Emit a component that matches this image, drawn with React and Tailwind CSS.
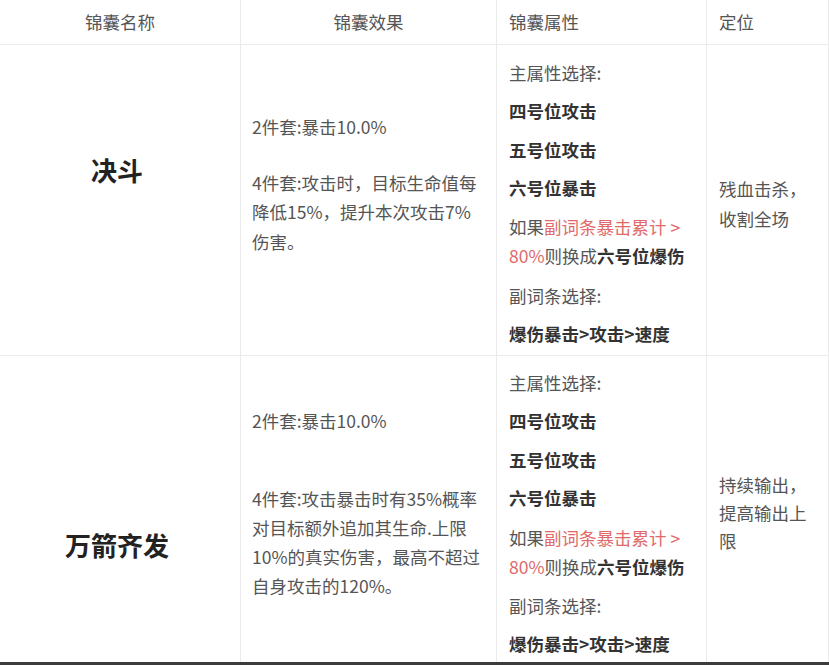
import React from "react";

const Red = ({ children }) => <span className="text-[#e06a6a]">{children}</span>;
const B = ({ children }) => <span className="font-bold text-[#333]">{children}</span>;

export default function App() {
  return (
    <div className="w-[829px] h-[665px] bg-white overflow-hidden font-['Noto_Sans_CJK_SC','Noto_Sans',sans-serif] text-[17.5px] text-[#555] flex flex-col">
      <div className="grid grid-cols-[241px_256px_210px_122px]">
        {/* header */}
        <div className="h-[45px] flex items-center justify-center border-r border-b border-[#ebebeb]">锦囊名称</div>
        <div className="h-[45px] flex items-center justify-center border-r border-b border-[#ebebeb]">锦囊效果</div>
        <div className="h-[45px] flex items-center pl-[12px] border-r border-b border-[#ebebeb]">锦囊属性</div>
        <div className="h-[45px] flex items-center pl-[12px] border-r border-b border-[#ebebeb]">定位</div>

        {/* row 1 */}
        <div className="h-[311px] pt-[107px] pr-[6px] text-center text-[26px] leading-[36px] font-bold text-[#222] border-r border-b border-[#ebebeb]">决斗</div>
        <div className="h-[311px] pt-[66.5px] pl-[11px] leading-[29.5px] whitespace-nowrap border-r border-b border-[#ebebeb]">
          <div>2件套:暴击10.0%</div>
          <div className="mt-[26.5px]">
            <div>4件套:攻击时，目标生命值每</div>
            <div>降低15%，提升本次攻击7%</div>
            <div>伤害。</div>
          </div>
        </div>
        <div className="h-[311px] flex flex-col gap-[9.5px] pt-[12.5px] pl-[12px] border-r border-b border-[#ebebeb] leading-[29px] whitespace-nowrap">
          <div>主属性选择:</div>
          <div><B>四号位攻击</B></div>
          <div><B>五号位攻击</B></div>
          <div><B>六号位暴击</B></div>
          <div>
            <div>如果<Red>副词条暴击累计 &gt;</Red></div>
            <div><Red>80%</Red>则换成<B>六号位爆伤</B></div>
          </div>
          <div className="mt-[1.5px]">副词条选择:</div>
          <div><B>爆伤暴击&gt;攻击&gt;速度</B></div>
        </div>
        <div className="h-[311px] pt-[128.5px] pl-[12px] leading-[30px] border-r border-b border-[#ebebeb]">
          <div>残血击杀，</div>
          <div>收割全场</div>
        </div>

        {/* row 2 */}
        <div className="h-[306px] pt-[171px] pr-[6px] text-center text-[26px] leading-[36px] font-bold text-[#222] border-r border-[#ebebeb]">万箭齐发</div>
        <div className="h-[306px] pt-[49.5px] pl-[11px] leading-[29px] whitespace-nowrap border-r border-[#ebebeb]">
          <div>2件套:暴击10.0%</div>
          <div className="mt-[49px]">
            <div>4件套:攻击暴击时有35%概率</div>
            <div>对目标额外追加其生命.上限</div>
            <div>10%的真实伤害，最高不超过</div>
            <div>自身攻击的120%。</div>
          </div>
        </div>
        <div className="h-[306px] flex flex-col gap-[9.5px] pt-[11.5px] pl-[12px] border-r border-[#ebebeb] leading-[29px] whitespace-nowrap">
          <div>主属性选择:</div>
          <div><B>四号位攻击</B></div>
          <div><B>五号位攻击</B></div>
          <div><B>六号位暴击</B></div>
          <div className="mt-[1.5px]">
            <div>如果<Red>副词条暴击累计 &gt;</Red></div>
            <div><Red>80%</Red>则换成<B>六号位爆伤</B></div>
          </div>
          <div>副词条选择:</div>
          <div><B>爆伤暴击&gt;攻击&gt;速度</B></div>
        </div>
        <div className="h-[306px] pt-[115px] pl-[12px] leading-[28px] border-r border-[#ebebeb]">
          <div>持续输出，</div>
          <div>提高输出上</div>
          <div>限</div>
        </div>
      </div>
      <div className="h-[3px] bg-[#3c3c3c]" />
    </div>
  );
}
